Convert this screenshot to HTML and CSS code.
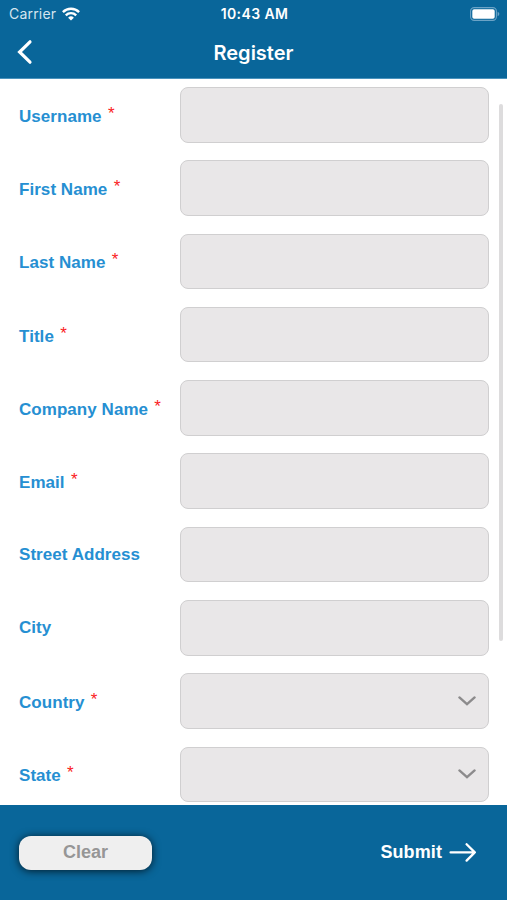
FILE: index.html
```html
<!DOCTYPE html>
<html lang="en">
<head>
  <meta charset="UTF-8" />
  <meta name="viewport" content="width=device-width, initial-scale=1.0" />
  <title>Register</title>
  <link rel="stylesheet" href="styles.css">
</head>
<body>
  <header class="header">
    <div class="status-bar">
      <div class="carrier">
        <span class="carrier-name">Carrier</span>
        <svg class="wifi" width="18" height="14" viewBox="0 0 18 14" fill="none" stroke="#fff" stroke-width="2.4">
          <path d="M0.9 5.1a11.5 11.5 0 0 1 16.2 0" />
          <path d="M3.8 8.3a7.4 7.4 0 0 1 10.4 0" />
          <path d="M9 13.6L6.1 10.7a4.1 4.1 0 0 1 5.8 0z" fill="#fff" stroke="none" />
        </svg>
      </div>
      <span class="time">10:43 AM</span>
      <svg class="battery" width="30" height="14" viewBox="0 0 30 14">
        <rect x="0.6" y="0.6" width="25.8" height="12.8" rx="3.6" fill="none" stroke="#6ba3c6" stroke-width="1.1" />
        <rect x="2.3" y="2.3" width="22.4" height="9.4" rx="1.8" fill="#fff" />
        <path d="M27.6 4.8c2.3 1 2.3 3.4 0 4.4z" fill="#6ba3c6" />
      </svg>
    </div>
    <div class="title-bar">
      <button class="back" aria-label="Back">
        <svg width="16" height="26" viewBox="0 0 16 26" fill="none" stroke="#fff" stroke-width="3.2" stroke-linecap="round">
          <path d="M13 2.8L2.6 13 13 23.2" />
        </svg>
      </button>
      <h1 class="title">Register</h1>
    </div>
  </header>

  <main class="content">
    <form class="form" id="register">
      <div class="row">
        <label for="username">Username <span class="required">*</span></label>
        <input type="text" class="field" id="username">
      </div>
      <div class="row">
        <label for="first-name">First Name <span class="required">*</span></label>
        <input type="text" class="field" id="first-name">
      </div>
      <div class="row">
        <label for="last-name">Last Name <span class="required">*</span></label>
        <input type="text" class="field" id="last-name">
      </div>
      <div class="row">
        <label for="job-title">Title <span class="required">*</span></label>
        <input type="text" class="field" id="job-title">
      </div>
      <div class="row">
        <label for="company">Company Name <span class="required">*</span></label>
        <input type="text" class="field" id="company">
      </div>
      <div class="row">
        <label for="email">Email <span class="required">*</span></label>
        <input type="text" class="field" id="email">
      </div>
      <div class="row optional">
        <label for="street">Street Address</label>
        <input type="text" class="field" id="street">
      </div>
      <div class="row optional">
        <label for="city">City</label>
        <input type="text" class="field" id="city">
      </div>
      <div class="row">
        <label for="country">Country <span class="required">*</span></label>
        <button type="button" class="field select" id="country">
          <svg width="18" height="10" viewBox="0 0 18 10" fill="none" stroke="#8c8b8c" stroke-width="2.3" stroke-linecap="round">
            <path d="M1.4 1.4L9 8.2l7.6-6.8" />
          </svg>
        </button>
      </div>
      <div class="row">
        <label for="state">State <span class="required">*</span></label>
        <button type="button" class="field select" id="state">
          <svg width="18" height="10" viewBox="0 0 18 10" fill="none" stroke="#8c8b8c" stroke-width="2.3" stroke-linecap="round">
            <path d="M1.4 1.4L9 8.2l7.6-6.8" />
          </svg>
        </button>
      </div>
    </form>
    <div class="scrollbar"></div>
  </main>

  <footer class="footer">
    <button class="clear" type="reset" form="register">Clear</button>
    <button class="submit" type="submit" form="register">
      Submit
      <svg width="28" height="20" viewBox="0 0 28 20" fill="none" stroke="#fff" stroke-width="2.3" stroke-linecap="round" stroke-linejoin="round">
        <path d="M1.6 9.4h24.2M17.6 1.2l8.2 8.2-8.2 8.2" />
      </svg>
    </button>
  </footer>
</body>
</html>
```
FILE: styles.css
```css
* {
  box-sizing: border-box;
}
body {
  font-family: "Liberation Sans", Arial, sans-serif;
  margin: 0;
  height: 900px;
  display: flex;
  flex-direction: column;
  overflow: hidden;
  background: #fff;
}
button {
  padding: 0;
  border: none;
  background: none;
  font-family: inherit;
  cursor: pointer;
}
svg {
  display: block;
}
.header {
  height: 79px;
  flex: none;
  background: #09669a;
  border-bottom: 1px solid #4a93bd;
  color: #fff;
  font-family: Inter, sans-serif;
}
.status-bar {
  height: 27px;
  padding: 0 7px 0 9px;
  display: grid;
  grid-template-columns: 1fr auto 1fr;
  align-items: center;
}
.carrier {
  display: flex;
  align-items: center;
  gap: 6px;
}
.carrier-name {
  color: #d5e5ef;
  font-size: 14px;
  letter-spacing: 0.2px;
}
.time {
  font-size: 14px;
  font-weight: 600;
  letter-spacing: 0.4px;
}
.battery {
  justify-self: end;
}
.title-bar {
  height: 50px;
  padding: 0 17px;
  display: grid;
  grid-template-columns: 1fr auto 1fr;
  align-items: center;
}
.back {
  justify-self: start;
}
.title {
  margin: 0;
  padding-top: 1px;
  font-size: 20px;
  font-weight: 600;
}
.content {
  flex: 1;
  min-height: 0;
  display: flex;
  overflow: hidden;
}
.form {
  flex: 1;
  padding: 8px 10px 0 19px;
  display: flex;
  flex-direction: column;
  gap: 17.8px;
}
.row {
  height: 55.5px;
  flex: none;
  display: grid;
  grid-template-columns: 161px 1fr;
  align-items: center;
}
label {
  padding-top: 4px;
  color: #268fd2;
  font-size: 17px;
  font-weight: bold;
  letter-spacing: 0.05px;
  white-space: nowrap;
}
.optional label {
  padding-top: 1px;
}
.required {
  position: relative;
  top: -3px;
  left: 1.5px;
  color: #fa1c24;
  font-weight: normal;
  line-height: 1;
}
.field {
  width: 100%;
  height: 100%;
  border: 1.5px solid #d0cfd0;
  border-radius: 8px;
  background: #e9e7e8;
  padding: 0 12px;
  font-size: 17px;
}
.select {
  display: flex;
  align-items: center;
  justify-content: flex-end;
}
.scrollbar {
  width: 4px;
  height: 537px;
  margin: 25px 4px 0 0;
  border-radius: 2px;
  background: #dddcdd;
}
.footer {
  height: 95px;
  flex: none;
  padding: 0 30px 0 19px;
  display: flex;
  align-items: center;
  justify-content: space-between;
  background: #09669a;
}
.clear {
  width: 133px;
  height: 34px;
  border-radius: 12px;
  background: #efefef;
  box-shadow: 0 1px 8px rgba(0, 0, 0, 0.75);
  color: #969696;
  font-size: 18px;
  font-weight: bold;
}
.submit {
  display: flex;
  align-items: center;
  gap: 7px;
  color: #fff;
  font-size: 18px;
  font-weight: bold;
  letter-spacing: 0.1px;
}
```
